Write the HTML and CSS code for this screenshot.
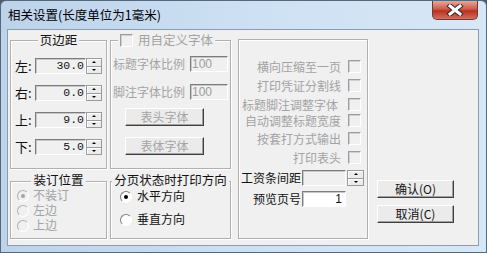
FILE: index.html
```html
<!DOCTYPE html>
<html lang="zh-CN">
  <head>
    <meta charset="UTF-8" />
    <title>相关设置</title>
    <link rel="stylesheet" href="styles.css">
  </head>
  <body>
    <div class="window">
      <!-- title bar -->
      <div class="titlebar">
        <span class="title">相关设置(长度单位为1毫米)</span>
        <span class="close-btn">
          <svg width="18" height="12" viewBox="0 0 18 12">
            <path d="M4 2 L14 10 M14 2 L4 10" stroke="#3b2a2a" stroke-width="5" stroke-linecap="square" />
            <path d="M4 2 L14 10 M14 2 L4 10" stroke="#fff" stroke-width="3" stroke-linecap="square" />
          </svg>
        </span>
      </div>

      <div class="client">
        <!-- left column -->
        <div class="col col-left">
          <div class="group group-margin">
            <div class="group-title">页边距</div>
            <div class="margin-rows">
              <div class="margin-row"><span class="lbl">左:</span><span class="edit num">30.0</span><span class="spin"><i class="up"></i><i class="down"></i></span></div>
              <div class="margin-row"><span class="lbl">右:</span><span class="edit num">0.0</span><span class="spin"><i class="up"></i><i class="down"></i></span></div>
              <div class="margin-row"><span class="lbl">上:</span><span class="edit num">9.0</span><span class="spin"><i class="up"></i><i class="down"></i></span></div>
              <div class="margin-row"><span class="lbl">下:</span><span class="edit num">5.0</span><span class="spin"><i class="up"></i><i class="down"></i></span></div>
            </div>
          </div>
          <div class="group group-bind">
            <div class="group-title">装订位置</div>
            <div class="radio-row disabled"><span class="radio checked"></span>不装订</div>
            <div class="radio-row disabled"><span class="radio"></span>左边</div>
            <div class="radio-row disabled"><span class="radio"></span>上边</div>
          </div>
        </div>

        <!-- middle column -->
        <div class="col col-mid">
          <div class="group group-font">
            <div class="group-title title-check"><span class="check"></span>用自定义字体</div>
            <div class="font-row"><span>标题字体比例</span><span class="edit small">100</span></div>
            <div class="font-row"><span>脚注字体比例</span><span class="edit small">100</span></div>
            <div class="btn disabled font-btn first">表头字体</div>
            <div class="btn disabled font-btn">表体字体</div>
          </div>
          <div class="group group-dir">
            <div class="group-title">分页状态时打印方向</div>
            <div class="radio-row"><span class="radio checked"></span>水平方向</div>
            <div class="radio-row second"><span class="radio"></span>垂直方向</div>
          </div>
        </div>

        <!-- options -->
        <div class="group group-options">
          <div class="opt-row">横向压缩至一页<span class="check"></span></div>
          <div class="opt-row">打印凭证分割线<span class="check"></span></div>
          <div class="opt-row opt-left">标题脚注调整字体<span class="check"></span></div>
          <div class="opt-row opt-tight">自动调整标题宽度<span class="check"></span></div>
          <div class="opt-row opt-mid">按套打方式输出<span class="check"></span></div>
          <div class="opt-row">打印表头<span class="check"></span></div>

          <div class="field-row spacing-row">
            <span class="field-lbl">工资条间距</span><span class="edit field gray"></span><span class="spin"><i class="up"></i><i class="down"></i></span>
          </div>
          <div class="field-row">
            <span class="field-lbl">预览页号</span><span class="edit field white">1</span>
          </div>
        </div>

        <!-- buttons -->
        <div class="buttons">
          <div class="btn">确认(O)</div>
          <div class="btn">取消(C)</div>
        </div>
      </div>
    </div>
  </body>
</html>
```

FILE: styles.css
```css
* {
  box-sizing: border-box;
}
body {
  margin: 0;
  background-color: #4e5a66;
  font-family: "Noto Sans CJK SC", "Liberation Sans", sans-serif;
  font-size: 12px;
  line-height: 14px;
  color: #111;
}

/* window frame */
.window {
  width: 487px;
  height: 253px;
  display: flex;
  flex-direction: column;
  padding: 0 7px 6px 6px;
  border: 1px solid #56687a;
  border-radius: 6px 6px 0 0;
  background: linear-gradient(to right, #bcd3eb, #cde0f3 50%, #d8e7f6);
}
.titlebar {
  height: 28px;
  display: flex;
  align-items: flex-start;
  justify-content: space-between;
  flex-shrink: 0;
}
.title {
  line-height: 28px;
  padding-left: 1px;
  font-size: 12.5px;
  color: #000;
}
.close-btn {
  width: 46px;
  height: 19px;
  margin-right: 1px;
  display: flex;
  align-items: center;
  justify-content: center;
  border: 1px solid #6e3a35;
  border-top: none;
  border-radius: 0 0 5px 5px;
  background: linear-gradient(to bottom, #e5a89e, #cf5a47 45%, #b8301f 55%, #d4705f);
}

/* dialog client area */
.client {
  flex: 1;
  display: flex;
  align-items: flex-start;
  padding: 9px 0 0 2px;
  background-color: #f0f0f0;
  border: 1px solid #8b9cae;
}
.col {
  display: flex;
  flex-direction: column;
  gap: 12px;
  margin-top: 1px;
}
.col-left {
  width: 97px;
}
.col-mid {
  width: 121px;
  margin-left: 3px;
}

/* group boxes */
.group {
  border: 1px solid #b0b0b0;
  box-shadow: inset 1px 1px 0 #fff, 1px 1px 0 #fff;
}
.group-title {
  width: fit-content;
  margin: -8px auto 0;
  padding: 0 2px;
  line-height: 14px;
  font-size: 12.5px;
  white-space: nowrap;
  background-color: #f0f0f0;
}
.group-margin {
  height: 129px;
}
.group-bind {
  height: 58px;
}
.group-font {
  height: 129px;
}
.group-dir {
  height: 58px;
}
.group-options {
  width: 130px;
  height: 200px;
  margin-left: 7px;
  padding-top: 20px;
}

/* tight rows: keep the latin primary font so line boxes stay small */
.group-bind,
.group-dir {
  font-family: "Liberation Sans", "Noto Sans CJK SC", sans-serif;
}

/* margin inputs */
.margin-rows {
  display: flex;
  flex-direction: column;
  gap: 11px;
  margin-top: 11px;
}
.margin-row {
  display: flex;
  align-items: center;
  height: 16px;
  padding-left: 4px;
}
.lbl {
  width: 20px;
  font-size: 13px;
}
.edit {
  height: 16px;
  border: 1px solid;
  border-color: #7c7c7c #fff #fff #7c7c7c;
  box-shadow: inset 1px 1px 0 #c8c8c8;
  background-color: #f0f0f0;
}
.num {
  width: 51px;
  text-align: right;
  padding-right: 1px;
  font-family: "Liberation Mono", monospace;
  font-size: 11.5px;
  line-height: 14px;
}
.spin {
  width: 16px;
  height: 16px;
  display: flex;
  flex-direction: column;
  border: 1px solid #9a9a9a;
  background-color: #ececec;
}
.spin i {
  flex: 1;
  display: flex;
  align-items: center;
  justify-content: center;
  border-bottom: 1px solid #9a9a9a;
  box-shadow: inset 1px 1px 0 #fff;
}
.spin i:last-child {
  border-bottom: none;
}
.spin i::after {
  content: "";
  border-left: 2px solid transparent;
  border-right: 2px solid transparent;
}
.spin .up::after {
  border-bottom: 2px solid #000;
}
.spin .down::after {
  border-top: 2px solid #000;
}

/* radios and checkboxes */
.radio-row {
  display: flex;
  align-items: center;
  gap: 4px;
  height: 15px;
  line-height: 14px;
  padding-left: 6px;
}
.radio-row.disabled {
  color: #a3a3a3;
}
.radio {
  width: 12px;
  height: 12px;
  border-radius: 50%;
  border: 1px solid;
  border-color: #7e7e7e #fff #fff #7e7e7e;
  background-color: #fff;
  display: flex;
  align-items: center;
  justify-content: center;
}
.disabled .radio {
  background-color: #f0f0f0;
  border-color: #b0b0b0 #fff #fff #b0b0b0;
}
.radio.checked::after {
  content: "";
  width: 4px;
  height: 4px;
  border-radius: 50%;
  background-color: #000;
}
.disabled .radio.checked::after {
  background-color: #a3a3a3;
}
.group-dir .radio-row {
  height: 16px;
  gap: 5px;
  padding-left: 9px;
  margin-top: 1px;
}
.group-dir .radio-row.second {
  margin-top: 7px;
}
.check {
  width: 13px;
  height: 13px;
  border: 1px solid;
  border-color: #9c9c9c #fff #fff #9c9c9c;
  box-shadow: inset 1px 1px 0 #d0d0d0;
  background-color: #f0f0f0;
}

/* custom font group */
.title-check {
  display: flex;
  align-items: center;
  gap: 5px;
  margin-left: 7px;
  color: #a3a3a3;
}
.font-row {
  display: flex;
  align-items: center;
  height: 16px;
  margin-top: 9px;
  padding-left: 2px;
  color: #a3a3a3;
}
.font-row + .font-row {
  margin-top: 12px;
}
.small {
  width: 38px;
  margin-left: 5px;
  padding-left: 1px;
  line-height: 14px;
  font-family: "Liberation Sans", sans-serif;
  color: #9c9c9c;
}
.font-btn {
  width: 79px;
  height: 19px;
  margin: 11px 0 0 14px;
}
.font-btn.first {
  margin-top: 8px;
}

/* options group */
.opt-row {
  display: flex;
  justify-content: flex-end;
  align-items: center;
  gap: 7px;
  height: 13px;
  padding-right: 6px;
  margin-bottom: 6px;
  color: #a3a3a3;
}
.opt-left {
  gap: 10px;
  margin-bottom: 3px;
}
.opt-tight {
  margin-bottom: 5px;
}
.field-row {
  display: flex;
  align-items: center;
  height: 16px;
  margin-top: 5px;
}
.spacing-row {
  margin-top: 2px;
}
.field-lbl {
  width: 63px;
  text-align: right;
  padding-right: 1px;
}
.field {
  width: 44px;
  line-height: 14px;
  text-align: right;
  padding-right: 3px;
  font-family: "Liberation Sans", sans-serif;
}
.field.white {
  background-color: #fff;
}
.field-row .spin {
  width: 17px;
  margin-left: 1px;
}

/* push buttons */
.buttons {
  width: 77px;
  margin: 141px 0 0 9px;
  display: flex;
  flex-direction: column;
  gap: 7px;
}
.btn {
  height: 18px;
  display: flex;
  align-items: center;
  justify-content: center;
  border: 1px solid;
  border-color: #fff #404040 #404040 #fff;
  box-shadow: inset -1px -1px 0 #a0a0a0;
  background-color: #ebebeb;
  line-height: 14px;
}
.btn.disabled {
  color: #a3a3a3;
}
```
